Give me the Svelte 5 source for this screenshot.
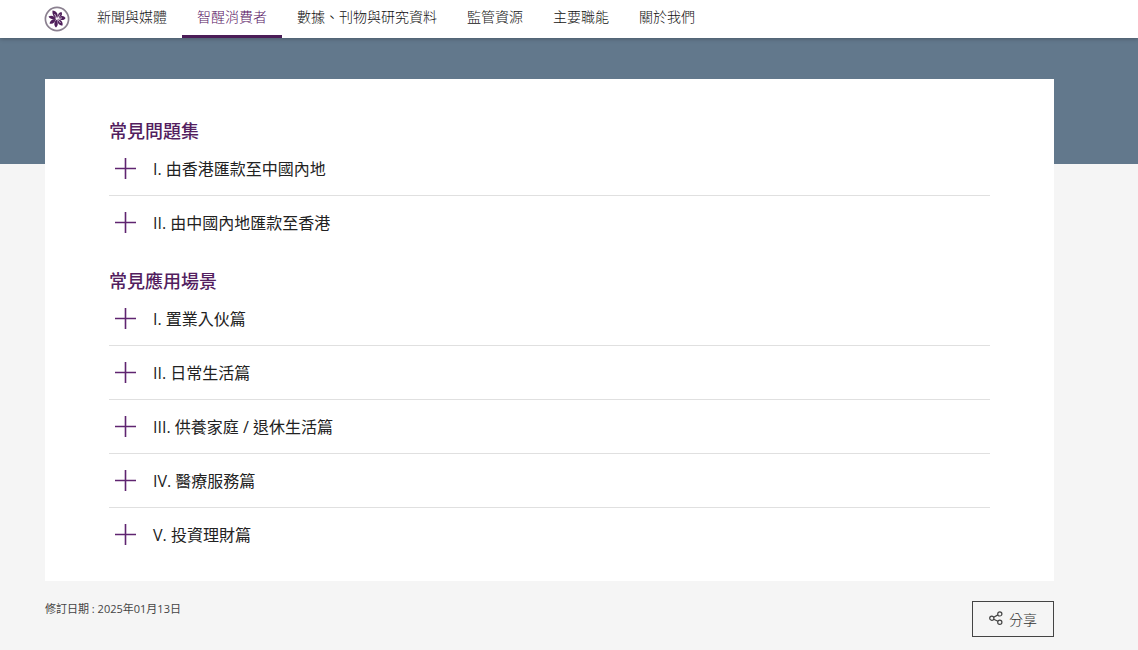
<script lang="ts">
  type Section = { title: string; items: string[] };

  const navItems = [
    '新聞與媒體',
    '智醒消費者',
    '數據、刊物與研究資料',
    '監管資源',
    '主要職能',
    '關於我們'
  ];
  const currentNav = '智醒消費者';

  const sections: Section[] = [
    {
      title: '常見問題集',
      items: ['I. 由香港匯款至中國內地', 'II. 由中國內地匯款至香港']
    },
    {
      title: '常見應用場景',
      items: [
        'I. 置業入伙篇',
        'II. 日常生活篇',
        'III. 供養家庭 / 退休生活篇',
        'IV. 醫療服務篇',
        'V. 投資理財篇'
      ]
    }
  ];

  let open = $state<Record<string, boolean>>({});

  function toggle(item: string) {
    open[item] = !open[item];
  }
</script>

<header class="site-header">
  <a class="logo" href="#home" aria-label="主頁">
    <svg viewBox="0 0 26 26" width="26" height="26" aria-hidden="true">
      <circle cx="13" cy="13" r="11.6" fill="#fff" stroke="#8b8090" stroke-width="1.7" />
      <g fill="#4f1f5b">
        <path d="M13.500 12 C10 12 8 9 8.500 4.500 C12.500 5 14.500 8 13.500 12Z" />
        <path d="M14 11 C13.500 8 15 6.500 17.500 6 C19 9 17 11 14 11Z" />
        <path d="M14.500 12 C17 9 20 9.500 21.500 12 C20 15 16.500 14.500 14.500 12Z" />
        <path d="M13.500 13 C18 14 19 16.500 18.500 19.500 C15 19.500 13 17 13.500 13Z" />
        <path d="M12.500 13.500 C14.500 17 14 20 12 21.500 C9.500 19.500 10 16 12.500 13.500Z" />
        <path d="M12 13 C11 17 8.500 18.500 5.500 17.500 C6 14.500 9 12.500 12 13Z" />
        <path d="M12 12.500 C9 14 6 13 4.500 10.500 C7 9 10 9.500 12 12.500Z" />
      </g>
      <path
        d="M13 12.500 L10.500 8 M13.500 12.500 L16 8.500 M14 12.500 L18 12 M13.500 13 L16.500 17"
        stroke="#e5dce8"
        stroke-width="0.8"
      />
    </svg>
  </a>
  <nav>
    {#each navItems as item}
      <a
        href="#{item}"
        class:current={item === currentNav}
        aria-current={item === currentNav ? 'page' : undefined}>{item}</a
      >
    {/each}
  </nav>
</header>

<div class="banner"></div>

<main>
  <div class="card">
    {#each sections as section}
      <section>
        <h2>{section.title}</h2>
        <ul>
          {#each section.items as item}
            <li>
              <button
                class="row"
                type="button"
                aria-expanded={!!open[item]}
                onclick={() => toggle(item)}
              >
                <svg viewBox="0 0 21 21" width="21" height="21" aria-hidden="true">
                  <path
                    d={open[item] ? 'M0 10.500H21' : 'M0 10.500H21M10.500 0V21'}
                    stroke="#5f2470"
                    stroke-width="1.6"
                  />
                </svg>
                <span>{item}</span>
              </button>
            </li>
          {/each}
        </ul>
      </section>
    {/each}
  </div>

  <div class="page-foot">
    <p>修訂日期 : 2025年01月13日</p>
    <button class="share" type="button">
      <svg viewBox="0 0 14 16" width="14" height="16" aria-hidden="true">
        <g fill="none" stroke="#444" stroke-width="1.2">
          <circle cx="2.800" cy="7.200" r="2.100" />
          <circle cx="10.800" cy="2.900" r="2.100" />
          <circle cx="10.800" cy="11.200" r="2.100" />
          <path d="M4.700 6.200L8.900 3.900M4.700 8.200L8.900 10.200" />
        </g>
      </svg>
      <span>分享</span>
    </button>
  </div>
</main>

<style>
  :global(body) {
    margin: 0;
    background: #f5f5f5;
    color: #222;
    font-family: 'Open Sans', 'Noto Sans CJK TC', sans-serif;
  }

  .site-header {
    position: relative;
    display: flex;
    align-items: stretch;
    height: 38px;
    padding-left: 44px;
    background: #fff;
    box-shadow: 0 1px 4px rgba(0, 0, 0, 0.25);
  }

  .logo {
    display: flex;
    align-items: center;
    margin-right: 12px;
  }

  nav {
    display: flex;
  }

  nav a {
    box-sizing: border-box;
    padding: 0 15px;
    border-bottom: 3px solid transparent;
    color: #111;
    font-size: 14px;
    font-weight: 300;
    line-height: 34px;
    text-decoration: none;
    white-space: nowrap;
  }

  nav a.current {
    border-bottom-color: #4b1d57;
    color: #55105f;
  }

  .banner {
    height: 126px;
    background: #62788c;
  }

  main {
    margin: -85px 84px 0 45px;
  }

  .card {
    position: relative;
    padding: 41px 64px 20px;
    background: #fff;
  }

  section + section {
    margin-top: 21px;
  }

  h2 {
    margin: 0;
    color: #531e5f;
    font-size: 18px;
    font-weight: 500;
    line-height: 22px;
  }

  ul {
    margin: 0;
    padding: 0;
    list-style: none;
  }

  li + li {
    border-top: 1px solid #e0e0e0;
  }

  .row {
    display: flex;
    align-items: center;
    gap: 17px;
    width: 100%;
    min-height: 53px;
    padding: 0 6px;
    border: 0;
    background: none;
    color: #222;
    font: inherit;
    font-size: 16px;
    line-height: 24px;
    text-align: left;
    cursor: pointer;
  }

  .page-foot {
    display: flex;
    align-items: flex-start;
    justify-content: space-between;
    padding: 20px 0 13px;
  }

  .page-foot p {
    margin: 0;
    color: #444;
    font-size: 11px;
    line-height: 16px;
  }

  .share {
    display: flex;
    align-items: center;
    gap: 6px;
    height: 36px;
    padding: 0 16px;
    border: 1px solid #444;
    background: none;
    color: #333;
    font: inherit;
    font-size: 14px;
    font-weight: 300;
    cursor: pointer;
  }
</style>
